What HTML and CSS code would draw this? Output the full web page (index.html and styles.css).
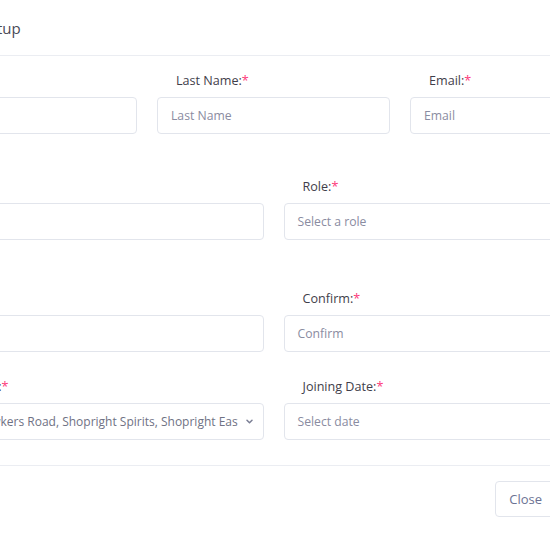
FILE: index.html
```html
<!DOCTYPE html>
<html lang="en">
<head>
<meta charset="utf-8">
<title>User Setup</title>
<link rel="stylesheet" href="styles.css">
</head>
<body>
<div class="modal">
  <div class="modal-header">
    <h5 class="modal-title">Add User Setup</h5>
  </div>
  <div class="modal-body">
    <div class="row cols-3 row-1">
      <div class="field">
        <label class="lbl">First Name:<span class="req">*</span></label>
        <div class="input placeholder">First Name</div>
      </div>
      <div class="field">
        <label class="lbl">Last Name:<span class="req">*</span></label>
        <div class="input placeholder">Last Name</div>
      </div>
      <div class="field">
        <label class="lbl">Email:<span class="req">*</span></label>
        <div class="input placeholder">Email</div>
      </div>
    </div>
    <div class="row cols-2 row-2">
      <div class="field">
        <label class="lbl">Username:<span class="req">*</span></label>
        <div class="input placeholder">Username</div>
      </div>
      <div class="field">
        <label class="lbl">Role:<span class="req">*</span></label>
        <div class="input placeholder">Select a role</div>
      </div>
    </div>
    <div class="row cols-2 row-3">
      <div class="field">
        <label class="lbl">Password:<span class="req">*</span></label>
        <div class="input placeholder">Password</div>
      </div>
      <div class="field">
        <label class="lbl">Confirm:<span class="req">*</span></label>
        <div class="input placeholder">Confirm</div>
      </div>
    </div>
    <div class="row cols-2 row-4">
      <div class="field">
        <label class="lbl">Select Stores:<span class="req">*</span></label>
        <div class="input select">
          <span class="select-text">Shopright Hawkers Road, Shopright Spirits, Shopright East Rand, Shopright Mall</span>
          <svg class="chev" width="7" height="5" viewBox="0 0 7 5"><path d="M1 1.2 L3.5 3.7 L6 1.2" fill="none" stroke="#7b7f95" stroke-width="1.5" stroke-linecap="round" stroke-linejoin="round"/></svg>
        </div>
      </div>
      <div class="field">
        <label class="lbl">Joining Date:<span class="req">*</span></label>
        <div class="input placeholder">Select date</div>
      </div>
    </div>
  </div>
  <div class="modal-footer">
    <button class="btn btn-secondary">Close</button>
    <button class="btn btn-primary">Submit</button>
  </div>
</div>
</body>
</html>
```

FILE: styles.css
```css
html, body {
  margin: 0;
  padding: 0;
  background: #ffffff;
  overflow: hidden;
}

body {
  font-family: "Open Sans", "Liberation Sans", sans-serif;
  font-size: 13px;
  color: #48465b;
}

.modal {
  width: 771px;
  margin-left: -112px;
  background: #ffffff;
}

.modal-header {
  padding: 16px 16px 15px 24px;
  border-bottom: 1px solid #ebedf2;
}

.modal-title {
  margin: 0;
  font-size: 15px;
  line-height: 24px;
  font-weight: 400;
  color: #4a4a56;
}

.modal-body {
  padding: 15px 16px 25px;
}

.row {
  display: grid;
  column-gap: 20px;
}

.cols-3 { grid-template-columns: repeat(3, 1fr); }
.cols-2 { grid-template-columns: repeat(2, 1fr); }

.row-2 { margin-top: 43px; }
.row-3 { margin-top: 49px; }
.row-4 { margin-top: 25px; }

.field {
  display: flex;
  flex-direction: column;
  min-width: 0;
}

.lbl {
  display: block;
  margin: 0 0 6px 19px;
  line-height: 20px;
  font-size: 12.6px;
  color: #3f3e4a;
}

.req {
  color: #fd397a;
}

.input {
  box-sizing: border-box;
  height: 37px;
  border: 1px solid #e2e5ec;
  border-radius: 4px;
  padding: 0 13px;
  display: flex;
  align-items: center;
  background: #ffffff;
  font-size: 12.2px;
}

.placeholder {
  color: #8a8ca1;
}

.select {
  padding-right: 10px;
  gap: 8px;
  color: #6f7284;
  font-size: 12px;
}

.select-text {
  flex: 1;
  min-width: 0;
  white-space: nowrap;
  overflow: hidden;
}

.chev {
  flex: none;
}

.modal-footer {
  border-top: 1px solid #ebedf2;
  padding: 15px 16px 16px;
  display: flex;
  justify-content: flex-end;
  gap: 16px;
}

.btn {
  font-family: "Open Sans", "Liberation Sans", sans-serif;
  font-size: 13px;
  height: 36px;
  padding: 0 13px;
  border-radius: 4px;
  line-height: 34px;
  background: #ffffff;
  cursor: pointer;
}

.btn-secondary {
  border: 1px solid #e2e5ec;
  color: #6c7293;
}

.btn-primary {
  border: 1px solid #5d78ff;
  background: #5d78ff;
  color: #ffffff;
}
```
